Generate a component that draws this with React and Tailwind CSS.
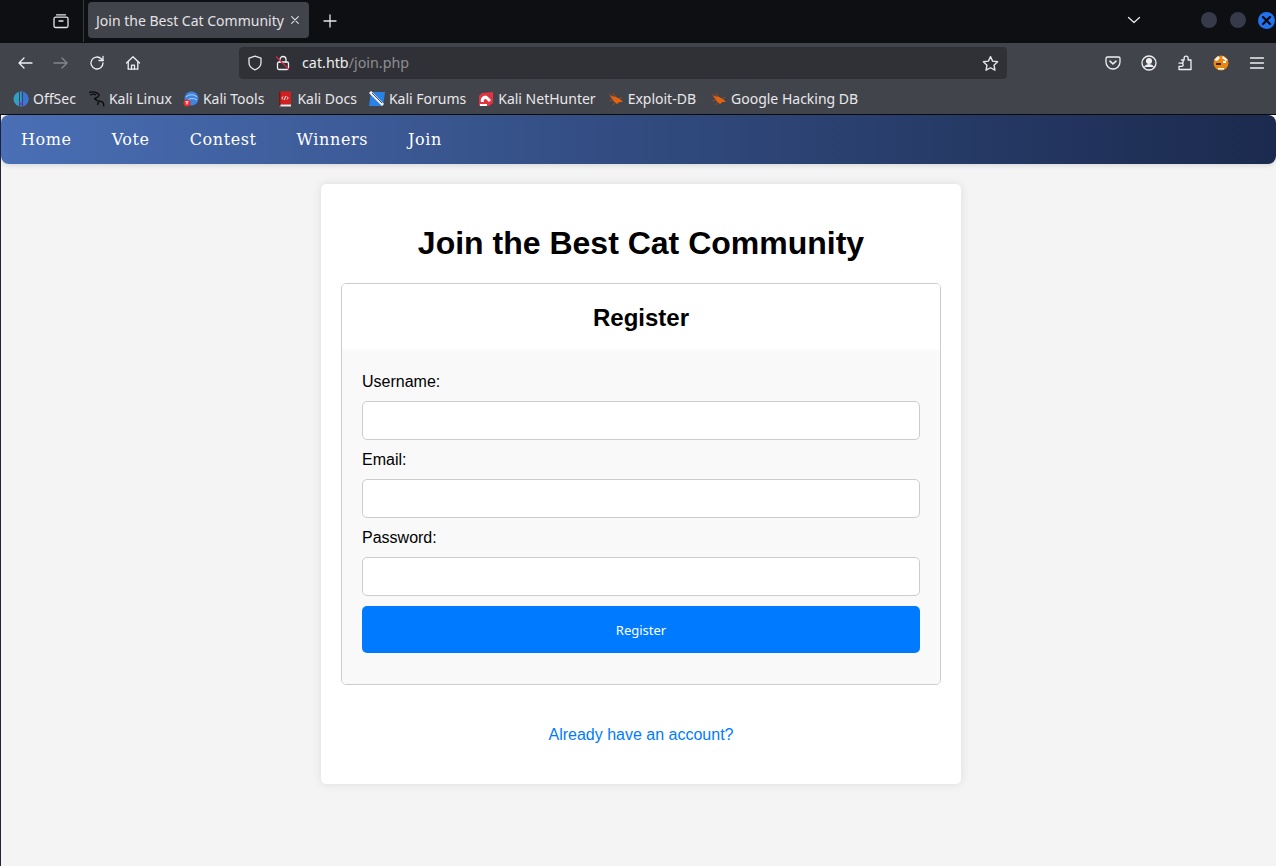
const uiFont = "font-['Noto_Sans','Open_Sans',sans-serif]";

const Stroke = ({ className = "", children, size = 16, vb = 16 }) => (
  <svg width={size} height={size} viewBox={`0 0 ${vb} ${vb}`} fill="none" stroke="currentColor" strokeWidth="1.3" strokeLinecap="round" strokeLinejoin="round" className={className}>
    {children}
  </svg>
);

const TabBar = () => (
  <div className="h-[43px] bg-[#0e0f13] flex items-center text-[#e6e6e8] pb-[3px]">
    <div className="w-[84px] h-[42px] self-start flex items-center justify-end pr-[14px] border-r border-[#3a3b40] shrink-0">
      <Stroke>
        <path d="M3.500 1.800h9" />
        <rect x="1" y="4.200" width="14" height="10.300" rx="1.500" />
        <path d="M6 8h4" />
      </Stroke>
    </div>
    <div className="ml-1 w-[221px] h-[36px] bg-[#42444c] rounded-[4px] flex items-center pl-2 pr-[9px] text-[14px] text-[#e2e2e4] whitespace-nowrap justify-between">
      <span>Join the Best Cat Community</span>
      <Stroke size={10} vb={12}>
        <path d="M2 2l8 8M10 2l-8 8" />
      </Stroke>
    </div>
    <div className="ml-[14px] mt-[2px]">
      <Stroke size={14} vb={14}>
        <path d="M7 1v12M1 7h12" />
      </Stroke>
    </div>
    <div className="ml-auto flex items-center">
      <Stroke size={14} vb={14} className="mr-[60px] mb-[1px]">
        <path d="M1.500 4.500L7 9.500l5.500-5" />
      </Stroke>
      <span className="w-4 h-4 rounded-full bg-[#373a48] mr-[13px]" />
      <span className="w-4 h-4 rounded-full bg-[#373a48] mr-[12px]" />
      <span className="w-[17px] h-[17px] rounded-full bg-[#2273f0] mr-[1px] flex items-center justify-center text-[#0a0c14]">
        <svg width="11" height="11" viewBox="0 0 11 11" fill="none" stroke="currentColor" strokeWidth="2.4" strokeLinecap="round">
          <path d="M2 2l7 7M9 2l-7 7" />
        </svg>
      </span>
    </div>
  </div>
);

const Toolbar = () => (
  <div className="h-[42px] bg-[#42444c] flex items-center text-[#f0f0f2] pb-[2px]">
    <div className="flex items-center ml-[17px]">
      <Stroke>
        <path d="M15 8H2M7 3L2 8l5 5" />
      </Stroke>
      <Stroke className="ml-[20px] text-[#85868c]">
        <path d="M1 8h13M9 3l5 5-5 5" />
      </Stroke>
      <Stroke className="ml-[20px]">
        <path d="M14 8a6 6 0 1 1-1.800-4.300L14 5.500" />
        <path d="M14 1.500v4h-4" />
      </Stroke>
      <Stroke className="ml-[20px]">
        <path d="M1.500 8L8 1.800 14.500 8" />
        <path d="M3.200 7v7.200h9.600V7" />
        <path d="M6.500 14V10.200h3V14" />
      </Stroke>
    </div>
    <div className="ml-[98px] w-[768px] h-8 bg-[#303136] rounded-[4px] flex items-center pl-2 pr-2 shrink-0">
      <Stroke className="text-[#e6e6e8]">
        <path d="M8 1.200l6 2v4.600c0 3.400-2.600 5.800-6 7-3.400-1.200-6-3.600-6-7V3.200z" />
      </Stroke>
      <span className="ml-3 relative inline-flex">
        <Stroke>
          <rect x="2.500" y="7" width="11" height="7.500" rx="1.500" />
          <path d="M5 7V4.500a3 3 0 0 1 6 0V7" />
        </Stroke>
        <svg width="16" height="16" viewBox="0 0 16 16" className="absolute inset-0">
          <path d="M1 1.500l13 13" stroke="#e0244f" strokeWidth="1.100" />
        </svg>
      </span>
      <span className="ml-[11px] text-[14.3px] text-[#eeeef0]">
        cat.htb<span className="text-[#8d8e94]">/join.php</span>
      </span>
      <Stroke size={17} vb={16} className="ml-auto text-[#e6e6e8]">
        <path d="M8 1.500l2 4.300 4.700.6-3.400 3.200.9 4.700L8 12l-4.200 2.300.9-4.700L1.300 6.400 6 5.800z" />
      </Stroke>
    </div>
    <div className="ml-auto flex items-center mr-[11px]">
      <Stroke>
        <path d="M2.500 2h11A1.500 1.500 0 0 1 15 3.500V7A7 7 0 0 1 1 7V3.500A1.500 1.500 0 0 1 2.500 2z" />
        <path d="M5 6.200L8 9l3-2.800" strokeWidth="1.600" />
      </Stroke>
      <Stroke className="ml-[20px]">
        <circle cx="8" cy="8" r="7" />
        <circle cx="8" cy="6" r="2.400" fill="currentColor" />
        <path d="M3.600 12c1-1.600 2.400-2.300 4.400-2.300s3.400.7 4.400 2.300" fill="currentColor" />
      </Stroke>
      <Stroke className="ml-[20px]">
        <path d="M2 8.200h2.500a1.700 1.700 0 1 0 0-3.400V5h2.600V3.200a2 2 0 1 1 4 0V5H14v9.500H2v-3.200h3a1.600 1.600 0 0 0 0-3.100z" />
      </Stroke>
      <svg width="16" height="16" viewBox="0 0 16 16" className="ml-[20px]">
        <circle cx="8" cy="8" r="7.500" fill="#e8860f" />
        <path d="M1 5l4-4 2 2-3 3zM10 1l5 4-2 1-4-3z" fill="#f4f4f4" />
        <path d="M3 8h5v2H3z" fill="#3a2a18" />
        <path d="M10 6h3v2h-3zM5 13h6v1.500H5z" fill="#fff" />
      </svg>
      <Stroke className="ml-[20px]">
        <path d="M1.500 3h13M1.500 8h13M1.500 13h13" />
      </Stroke>
    </div>
  </div>
);

const Bug = () => (
  <svg width="16" height="16" viewBox="0 0 16 16" className="shrink-0">
    <path d="M2 5l5 .5 5 2.500 3 3-3.500 0-2.500 2-3-2.500z" fill="#e2620f" />
    <path d="M1 3.500l4 2M5 2l2 3.500M1.500 10L5 8.500M5 14l2-3M14 6l-3 2" stroke="#b8520f" strokeWidth="0.7" />
  </svg>
);

const Bookmark = ({ icon, label, className = "" }) => (
  <div className={`flex items-center gap-[4px] ${className}`}>
    {icon}
    <span>{label}</span>
  </div>
);

const Bookmarks = () => (
  <div className="h-[27px] pb-[2px] bg-[#42444c] border-b border-[#0c0c0e] box-content flex items-center pl-[13px] text-[14px] text-[#e8e8ea] whitespace-nowrap">
    <Bookmark
      label="OffSec"
      icon={
        <svg width="16" height="16" viewBox="0 0 16 16">
          <circle cx="8" cy="8" r="7.500" fill="#2f9fc4" />
          <path d="M8 .5A7.500 7.500 0 0 1 15.500 8 7.500 7.500 0 0 1 9 15.400z" fill="#3a76d8" />
          <path d="M6.500 1v14M9.500 1v14" stroke="#42444c" strokeWidth="1" />
          <path d="M6 11h4l-2 4.500z" fill="#7a3ed0" />
        </svg>
      }
    />
    <Bookmark
      className="ml-[13px]"
      label="Kali Linux"
      icon={
        <svg width="16" height="16" viewBox="0 0 16 16" fill="none" stroke="#0a0a0a" strokeWidth="1.300">
          <path d="M0 1.500c3.500-1 7-.5 9.500 1.500 1.500 1.500-.5 3-2 3.500-1.500.5-1.500 2 0 3 2 1 5 .5 6.500 2 .8 1 .8 2.500.8 4" />
          <path d="M1 4c2-1 4-1.200 6 0M5 7.500c1 0 2 .2 2.500 1M9.500 11l-1 3" />
        </svg>
      }
    />
    <Bookmark
      className="ml-[11px]"
      label="Kali Tools"
      icon={
        <svg width="16" height="16" viewBox="0 0 16 16">
          <circle cx="8.500" cy="7.500" r="7" fill="#3f84e0" />
          <path d="M3 6c3-3 8-3 11 0M5 9c2-2 6-2 9 0" stroke="#cfe2fa" strokeWidth="0.8" fill="none" />
          <circle cx="4" cy="12" r="3.500" fill="#e02c2c" />
          <path d="M2.500 10.500h3M3.300 10.500v3M4.700 10.500v3" stroke="#fff" strokeWidth="0.7" />
        </svg>
      }
    />
    <Bookmark
      className="ml-[13px]"
      label="Kali Docs"
      icon={
        <svg width="16" height="16" viewBox="0 0 16 16">
          <rect x="2" y="0.500" width="12" height="13" fill="#d1201f" />
          <rect x="2" y="13.500" width="12" height="2" fill="#e8e8e8" />
          <path d="M2 0.500h1.500v15H2z" fill="#7c1414" />
          <path d="M6 5.500L4.800 7 6 8.500M10 5.500L11.200 7 10 8.500M8.600 5L7.400 9" stroke="#fff" strokeWidth="0.9" fill="none" />
        </svg>
      }
    />
    <Bookmark
      className="ml-[12px]"
      label="Kali Forums"
      icon={
        <svg width="16" height="16" viewBox="0 0 16 16">
          <path d="M2 1h14l-2 14H0z" fill="#2b82e6" />
          <path d="M1 1l13 13" stroke="#f4f4f4" strokeWidth="3" />
          <path d="M3 2l10 10" stroke="#222" strokeWidth="0.8" />
        </svg>
      }
    />
    <Bookmark
      className="ml-[12px]"
      label="Kali NetHunter"
      icon={
        <svg width="16" height="16" viewBox="0 0 16 16">
          <path d="M4 2L15 1v11l-4 3H1V5z" fill="#e23440" />
          <path d="M3 11c-1-4 2-7 6-6l4 4-2 2-3-3c-2 0-3 1-2 3z" fill="#fff" />
          <path d="M2 13h7v2H2z" fill="#fff" />
        </svg>
      }
    />
    <Bookmark className="ml-[12px]" label="Exploit-DB" icon={<Bug />} />
    <Bookmark className="ml-[15px]" label="Google Hacking DB" icon={<Bug />} />
  </div>
);

const Field = ({ label, type = "text" }) => (
  <div>
    <label className="block text-[16px] leading-[18px] text-black mb-[10px]">{label}</label>
    <input type={type} className="block w-full h-[39px] bg-white border border-[#ccc] rounded-[5px]" />
  </div>
);

export default function App() {
  return (
    <div className={`w-[1276px] h-[866px] overflow-hidden flex flex-col bg-[#f4f4f4] ${uiFont}`}>
      <TabBar />
      <Toolbar />
      <Bookmarks />
      <div className="flex-1 border-l border-[#20243c] font-['Liberation_Sans',Arial,sans-serif]">
        <nav className="h-[49px] rounded-[8px] bg-gradient-to-r from-[#4a6fb5] to-[#1b2a4e] flex items-center pl-[20px] pt-[1px] gap-[40px] shadow-[0_2px_4px_rgba(0,0,0,0.1)] text-white text-[16px] tracking-[0.6px] font-['DejaVu_Serif',serif]">
          <a>Home</a>
          <a>Vote</a>
          <a>Contest</a>
          <a>Winners</a>
          <a>Join</a>
        </nav>
        <div className="mt-5 ml-[320px] w-[640px] h-[600px] bg-white rounded-[5px] shadow-[0_0_10px_rgba(0,0,0,0.1)] p-5 flex flex-col">
          <h1 className="mt-[21px] text-[32px] leading-[37px] font-bold text-black text-center">
            Join the Best Cat Community
          </h1>
          <div className="mt-[21px] h-[402px] border border-[#ccc] rounded-[5px] flex flex-col overflow-hidden">
            <div className="h-[67px] bg-white flex items-center justify-center">
              <h2 className="text-[24px] leading-[28px] font-bold text-black">Register</h2>
            </div>
            <div className="flex-1 bg-[#f9f9f9] px-5 pt-[22px] shadow-[0_-1px_4px_rgba(0,0,0,0.03)]">
              <div className="flex flex-col gap-[11px]">
                <Field label="Username:" />
                <Field label="Email:" />
                <Field label="Password:" type="password" />
              </div>
              <button className={`mt-[10px] block w-full h-[47px] pt-[2px] bg-[#007bff] rounded-[5px] text-white text-[13px] ${uiFont}`}>
                Register
              </button>
            </div>
          </div>
          <a className="mt-[41px] text-center text-[16px] leading-[18px] text-[#007bff]">Already have an account?</a>
        </div>
      </div>
    </div>
  );
}
